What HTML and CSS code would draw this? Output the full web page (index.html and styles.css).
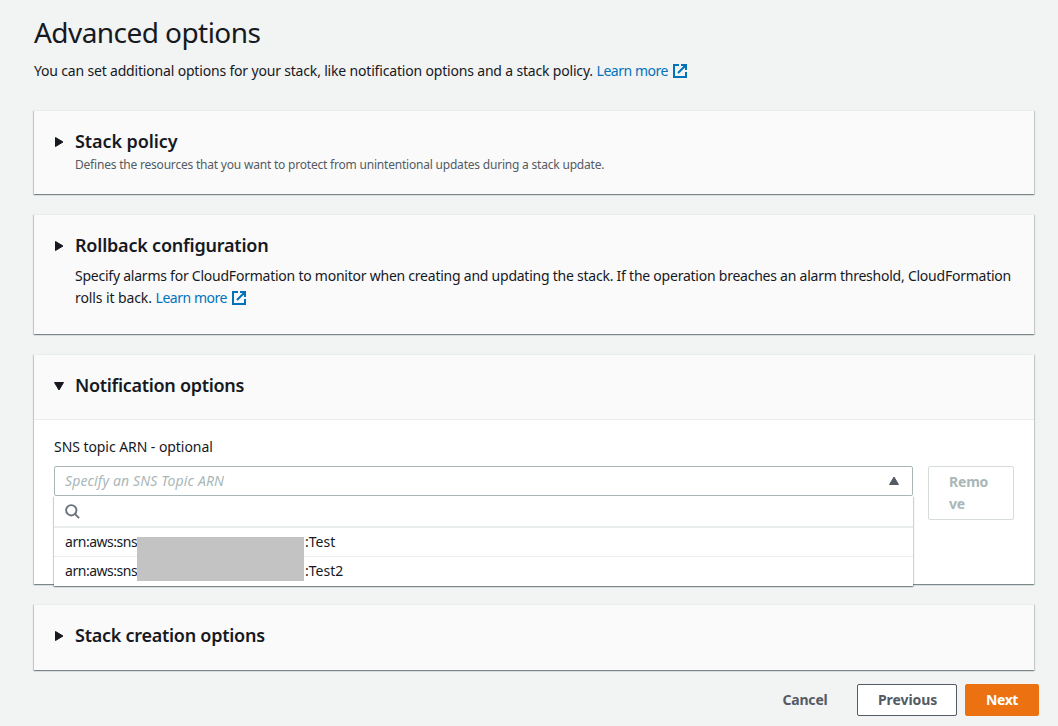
FILE: index.html
```html
<!DOCTYPE html>
<html lang="en">
<head>
<meta charset="utf-8">
<title>Advanced options</title>
<link rel="stylesheet" href="styles.css">
</head>
<body>
<main class="page">
  <header class="page-header">
    <h1 class="page-title"><span class="t-title">Advanced options</span></h1>
    <p class="page-desc"><span class="t-desc">You can set additional options for your stack, like notification options and a stack policy.</span> <a class="link t-link" href="#">Learn more</a><svg class="ext" viewBox="0 0 16 16"><path d="M7 2H2v12h12V9M9 2H14v5M13.500 2.500L6 10"/></svg></p>
  </header>

  <section class="card card-policy">
    <div class="card-head">
      <svg class="caret" viewBox="0 0 10 10"><path d="M1.500 .5v9L9 5z"/></svg>
      <div class="card-text">
        <h2 class="card-title"><span class="t-policy">Stack policy</span></h2>
        <p class="card-sub"><span class="t-sub">Defines the resources that you want to protect from unintentional updates during a stack update.</span></p>
      </div>
    </div>
  </section>

  <section class="card card-rollback">
    <div class="card-head">
      <svg class="caret" viewBox="0 0 10 10"><path d="M1.500 .5v9L9 5z"/></svg>
      <div class="card-text">
        <h2 class="card-title"><span class="t-rollback">Rollback configuration</span></h2>
        <p class="card-desc"><span class="t-roll1">Specify alarms for CloudFormation to monitor when creating and updating the stack. If the operation breaches an alarm threshold, CloudFormation</span><br><span class="t-roll2">rolls it back.</span> <a class="link t-link" href="#">Learn more</a><svg class="ext" viewBox="0 0 16 16"><path d="M7 2H2v12h12V9M9 2H14v5M13.500 2.500L6 10"/></svg></p>
      </div>
    </div>
  </section>

  <section class="card card-notify">
    <div class="card-head card-head-open">
      <svg class="caret" viewBox="0 0 10 10"><path d="M.5 1.500h9L5 9z"/></svg>
      <div class="card-text"><h2 class="card-title"><span class="t-notify">Notification options</span></h2></div>
    </div>
    <div class="card-body">
      <label class="field-label"><span class="t-label">SNS topic ARN - optional</span></label>
      <div class="field-row">
        <div class="select">
          <div class="select-trigger">
            <span class="placeholder t-ph">Specify an SNS Topic ARN</span>
            <svg class="select-caret" viewBox="0 0 10 10"><path d="M.5 8.500h9L5 1z"/></svg>
          </div>
          <div class="dropdown">
            <div class="search"><svg class="search-icon" viewBox="0 0 16 16"><circle cx="6.700" cy="6.700" r="5.500"/><path d="M10.500 10.500L15 15"/></svg></div>
            <div class="option"><span class="t-arn">arn:aws:sns</span><span class="gap"></span><span class="t-test">:Test</span></div>
            <div class="option"><span class="t-arn">arn:aws:sns</span><span class="gap"></span><span class="t-test">:Test2</span></div>
            <div class="redaction"></div>
          </div>
        </div>
        <button class="btn btn-remove"><span class="t-remove">Remove</span></button>
      </div>
    </div>
  </section>

  <section class="card card-creation">
    <div class="card-head">
      <svg class="caret" viewBox="0 0 10 10"><path d="M1.500 .5v9L9 5z"/></svg>
      <div class="card-text"><h2 class="card-title"><span class="t-creation">Stack creation options</span></h2></div>
    </div>
  </section>

  <footer class="actions">
    <button class="btn btn-link"><span class="t-cancel">Cancel</span></button>
    <button class="btn btn-normal"><span class="t-prev">Previous</span></button>
    <button class="btn btn-primary"><span class="t-next">Next</span></button>
  </footer>
</main>
</body>
</html>
```
FILE: styles.css
```css
* { box-sizing: border-box; }
body {
  margin: 0;
  height: 726px;
  overflow: hidden;
  background: #f2f3f3;
  color: #16191f;
  font: 14px/22px "Noto Sans", "Open Sans", sans-serif;
}
h1, h2, p { margin: 0; }
.page { padding: 14px 19px 0 34px; }
.page-header { height: 96px; }
.page-title { font-size: 28px; line-height: 36px; font-weight: 400; }
.page-desc { margin-top: 10px; font-size: 14px; white-space: nowrap; }
.link { color: #0073bb; text-decoration: none; }
.ext {
  width: 16px;
  height: 16px;
  margin-left: 4px;
  vertical-align: -3px;
  fill: none;
  stroke: #0073bb;
  stroke-width: 2;
}
.card {
  width: 1000px;
  margin-bottom: 20px;
  background: #fafafa;
  border-top: 1px solid #eaeded;
  box-shadow: 0 1px 1px 0 rgba(0,28,36,.3), 1px 1px 1px 0 rgba(0,28,36,.15), -1px 1px 1px 0 rgba(0,28,36,.15);
}
.card-policy { height: 84px; }
.card-rollback { height: 120px; }
.card-notify { height: 230px; background: #fff; }
.card-creation { height: 66px; margin-bottom: 14px; }
.card-head { display: flex; padding: 19px 20px 0; }
.card-head-open { height: 65px; background: #fafafa; border-bottom: 1px solid #eaeded; }
.caret { width: 10px; height: 10px; margin: 7px 11px 0 0; fill: #16191f; stroke: #16191f; stroke-linejoin: round; stroke-width: 1; flex: none; }
.card-title { font-size: 18px; line-height: 22px; font-weight: 600; white-space: nowrap; }
.card-sub { font-size: 12px; line-height: 22px; color: #545b64; margin-top: 2px; white-space: nowrap; }
.card-desc { margin-top: 9px; white-space: nowrap; }
.card-body { padding: 16px 20px 0; }
.field-label { display: block; }
.field-row { display: flex; gap: 15px; align-items: flex-start; margin-top: 8px; }
.select { position: relative; width: 859px; }
.select-trigger {
  display: flex;
  align-items: center;
  justify-content: space-between;
  height: 30px;
  padding: 0 13px 0 10px;
  background: #fff;
  border: 1px solid #aab7b8;
  border-radius: 2px;
}
.placeholder { color: #aab7b8; font-style: italic; white-space: nowrap; }
.select-caret { width: 10px; height: 10px; fill: #545b64; stroke: #545b64; stroke-linejoin: round; }
.dropdown {
  position: absolute;
  top: 30px;
  left: 0;
  width: 859px;
  height: 90px;
  background: #fff;
  box-shadow: 0 1px 1px 0 rgba(0,28,36,.3), 1px 1px 1px 0 rgba(0,28,36,.15), -1px 1px 1px 0 rgba(0,28,36,.15);
}
.search { height: 32px; padding: 8px 11px; border-bottom: 2px solid #eaeded; }
.search-icon { display: block; width: 15px; height: 15px; fill: none; stroke: #687078; stroke-width: 2; }
.option { display: flex; height: 28px; padding: 3px 11px; white-space: nowrap; }
.option + .option { height: 30px; border-top: 1px solid #eaeded; }
.gap { flex: none; width: 168px; }
.redaction { position: absolute; left: 83px; top: 41px; width: 167px; height: 44px; background: #c3c3c3; }
.btn { margin: 0; font: 700 14px/22px "Noto Sans", "Open Sans", sans-serif; border: 1px solid transparent; border-radius: 2px; background: none; color: #545b64; padding: 4px 20px; }
.btn-remove { width: 86px; height: 54px; background: #fff; border-color: #d5dbdb; color: #aab7b8; text-align: left; word-break: break-all; }
.actions { display: flex; justify-content: flex-end; gap: 8px; height: 32px; }
.btn-link { width: 88px; }
.btn-normal { width: 100px; background: #fff; border-color: #545b64; }
.btn-primary { width: 74px; background: #ec7211; border-color: #ec7211; color: #fff; }

/* Tracking per text run */
.t-title { letter-spacing: -.56px; }
.t-desc { letter-spacing: -.178px; }
.t-link { letter-spacing: -.46px; }
.t-sub { letter-spacing: -.205px; }
.t-policy { letter-spacing: -.08px; }
.t-rollback { letter-spacing: -.21px; }
.t-notify { letter-spacing: -.3px; }
.t-creation { letter-spacing: -.26px; }
.t-roll1 { letter-spacing: -.237px; }
.t-roll2 { letter-spacing: -.1px; }
.t-label { letter-spacing: -.06px; }
.t-ph { letter-spacing: .15px; }
.t-arn { width: 72px; letter-spacing: -.47px; }
.t-remove { letter-spacing: -.2px; }
.t-cancel { letter-spacing: -.2px; }
.t-prev { letter-spacing: -.07px; }
.t-next { letter-spacing: -.4px; }
```
